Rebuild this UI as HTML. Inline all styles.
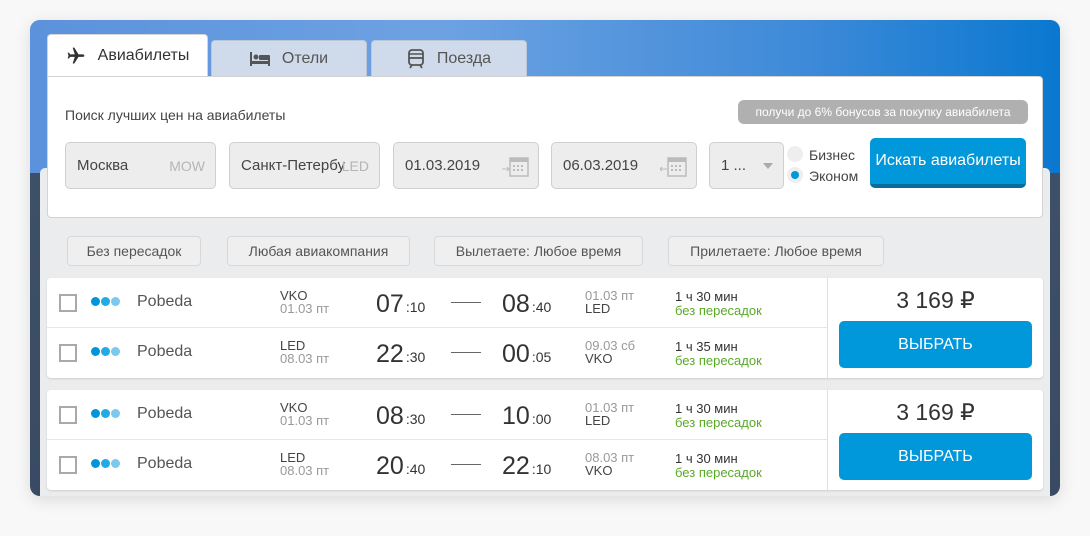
<!DOCTYPE html>
<html><head><meta charset="utf-8"><style>
*{margin:0;padding:0;box-sizing:border-box}
body{width:1090px;height:536px;background:#f8f8f8;font-family:"Liberation Sans",Arial,sans-serif;position:relative;overflow:hidden;color:#333}
.a{position:absolute}
#card{left:30px;top:20px;width:1030px;height:476px;border-radius:10px;overflow:hidden;box-shadow:0 4px 16px rgba(0,0,0,.12);background:linear-gradient(180deg,#5b90da 0,#6a9de0 100px,#4a7fc8 152px,#3e5068 153px,#3a4a63 100%)}
#sky{left:0;top:0;width:1030px;height:153px;background:linear-gradient(90deg,#5c92dc 0%,#6da2e2 40%,#3e8ad8 75%,#0a78d0 100%)}
#panel{left:10px;top:148px;width:1010px;height:340px;background:#ebecee;border-radius:5px}
.tab{height:36px;top:40px;background:#cfdbea;border:1px solid #b9c7d8;border-bottom:none;border-radius:4px 4px 0 0;font-size:16px;color:#555;display:flex;align-items:center;justify-content:center;gap:12px}
#search{left:47px;top:76px;width:996px;height:142px;background:#fff;border:1px solid #d3d3d3;border-radius:0 4px 4px 4px}
.inp{top:142px;height:47px;background:#ededed;border:1px solid #cfcfcf;border-radius:5px;font-size:15px;color:#444;display:flex;align-items:center;padding-left:11px}
.code{position:absolute;right:10px;top:15px;color:#b5b5b5;font-size:14px}
.flt{top:236px;height:30px;border:1px solid #d8d8d8;border-radius:4px;background:#efefef;font-size:14px;color:#555;display:flex;align-items:center;justify-content:center}
.res{left:47px;width:996px;height:100px;background:#fff;border-radius:4px;box-shadow:0 1px 2px rgba(0,0,0,.12)}
.row{position:absolute;left:0;width:780px;height:50px}
.cb{position:absolute;left:12px;top:16px;width:18px;height:18px;border:2px solid #a9a9a9}
.dots{position:absolute;left:44px;top:19px;display:flex;gap:1px}
.dots i{display:block;width:9px;height:9px;border-radius:50%}
.air{position:absolute;left:90px;top:15px;font-size:16px;color:#555}
.ap{position:absolute;font-size:13px;line-height:13px}
.t{position:absolute;top:12px;font-size:25px;color:#333}
.t span{font-size:14px;margin-left:2px}
.ln{position:absolute;left:404px;top:24px;width:30px;height:1px;background:#666}
.dur{position:absolute;left:628px;top:12px;font-size:13px;line-height:14px;color:#333}
.dur b{font-weight:normal;color:#5aaa2a}
.price{position:absolute;left:780px;top:0;width:216px;height:100px;border-left:1px solid #e0e0e0}
.pv{position:absolute;top:9px;width:100%;text-align:center;font-size:23px;color:#333}
.btn{position:absolute;left:11px;top:43px;width:193px;height:47px;background:#0098da;border-radius:5px;color:#fff;font-size:16px;display:flex;align-items:center;justify-content:center}
</style></head><body>
<div id="card" class="a">
<div id="sky" class="a"></div>
<div id="panel" class="a"></div>
</div>
<div class="a tab" style="left:47px;top:34px;width:161px;height:43px;background:#fff;border-color:#d5d5d5;color:#333">
<svg width="20" height="20" viewBox="0 0 24 24"><path fill="#333" d="M21 16v-2l-8-5V3.5C13 2.7 12.3 2 11.5 2h0C10.7 2 10 2.7 10 3.5V9l-8 5v2l8-2.5V19l-2 1.5V22l3.5-1 3.5 1v-1.5L13 19v-5.5z" transform="rotate(90 12 12)"/></svg>Авиабилеты</div>
<div class="a tab" style="left:211px;width:156px"><svg width="20" height="14" viewBox="0 0 20 14"><rect x="0" y="0" width="2" height="14" fill="#555"/><rect x="0" y="9" width="20" height="3" fill="#555"/><rect x="18" y="6" width="2" height="8" fill="#555"/><circle cx="6" cy="5" r="2.5" fill="#555"/><rect x="9" y="3" width="11" height="5" rx="1" fill="#555"/></svg>Отели</div>
<div class="a tab" style="left:371px;width:156px"><svg width="18" height="20" viewBox="0 0 18 20"><rect x="2" y="1" width="14" height="15" rx="3" fill="none" stroke="#555" stroke-width="1.8"/><line x1="2" y1="9" x2="16" y2="9" stroke="#555" stroke-width="1.8"/><line x1="2" y1="5" x2="16" y2="5" stroke="#555" stroke-width="1.5"/><path d="M5 16l-2 3M13 16l2 3" stroke="#555" stroke-width="1.8"/></svg>Поезда</div>
<div id="search" class="a"></div>
<div class="a" style="left:65px;top:107px;font-size:14px;color:#444">Поиск лучших цен на авиабилеты</div>
<div class="a" style="left:738px;top:100px;width:290px;height:24px;background:#b0b0b0;border-radius:6px;color:#fff;font-size:12px;display:flex;align-items:center;justify-content:center">получи до 6% бонусов за покупку авиабилета</div>
<div class="a inp" style="left:65px;width:151px">Москва<span class="code">MOW</span></div>
<div class="a inp" style="left:229px;width:151px;overflow:hidden"><span style="white-space:nowrap">Санкт-Петербу</span><span class="code" style="right:10px">LED</span></div>
<div class="a inp" style="left:393px;width:146px">01.03.2019<svg class="a" style="right:8px;top:12px" width="28" height="22" viewBox="0 0 28 22"><rect x="8" y="3" width="18" height="18" fill="none" stroke="#bbb" stroke-width="1.5"/><rect x="8" y="3" width="18" height="4" fill="#bbb"/><g fill="#bbb"><rect x="11" y="10" width="2" height="2"/><rect x="15" y="10" width="2" height="2"/><rect x="19" y="10" width="2" height="2"/><rect x="11" y="14" width="2" height="2"/><rect x="15" y="14" width="2" height="2"/><rect x="19" y="14" width="2" height="2"/></g><path d="M0 14h7M5 12l2 2-2 2" stroke="#bbb" fill="none"/></svg></div>
<div class="a inp" style="left:551px;width:146px">06.03.2019<svg class="a" style="right:8px;top:12px" width="28" height="22" viewBox="0 0 28 22"><rect x="8" y="3" width="18" height="18" fill="none" stroke="#bbb" stroke-width="1.5"/><rect x="8" y="3" width="18" height="4" fill="#bbb"/><g fill="#bbb"><rect x="11" y="10" width="2" height="2"/><rect x="15" y="10" width="2" height="2"/><rect x="19" y="10" width="2" height="2"/><rect x="11" y="14" width="2" height="2"/><rect x="15" y="14" width="2" height="2"/><rect x="19" y="14" width="2" height="2"/></g><path d="M0 14h7M2 12l-2 2 2 2" stroke="#bbb" fill="none"/></svg></div>
<div class="a inp" style="left:709px;width:75px">1 ...<span class="a" style="right:10px;top:20px;border:5px solid transparent;border-top:6px solid #aaa"></span></div>
<div class="a" style="left:787px;top:146px;width:16px;height:16px;border-radius:50%;background:#eee"></div>
<div class="a" style="left:787px;top:167px;width:16px;height:16px;border-radius:50%;background:#eee"><div style="margin:4px;width:8px;height:8px;border-radius:50%;background:#0098da"></div></div>
<div class="a" style="left:809px;top:147px;font-size:14px;color:#444">Бизнес</div>
<div class="a" style="left:809px;top:168px;font-size:14px;color:#444">Эконом</div>
<div class="a" style="left:870px;top:138px;width:156px;height:50px;background:#0098da;border-bottom:4px solid #0a6c9a;border-radius:5px;color:#fff;font-size:16px;display:flex;align-items:center;justify-content:center">Искать авиабилеты</div>
<div class="a flt" style="left:67px;width:134px">Без пересадок</div>
<div class="a flt" style="left:227px;width:183px">Любая авиакомпания</div>
<div class="a flt" style="left:434px;width:209px">Вылетаете: Любое время</div>
<div class="a flt" style="left:668px;width:216px">Прилетаете: Любое время</div>

<div class="a res" style="top:278px">
 <div class="row" style="top:0;border-bottom:1px solid #e6e6e6"><div class="cb"></div><div class="dots"><i style="background:#0094d9"></i><i style="background:#22aae3"></i><i style="background:#7cc8ee"></i></div><div class="air">Pobeda</div>
 <div class="ap" style="left:233px;top:11px;color:#444">VKO<br><span style="color:#999">01.03 пт</span></div>
 <div class="t" style="left:329px">07<span>:10</span></div><div class="ln"></div><div class="t" style="left:455px">08<span>:40</span></div>
 <div class="ap" style="left:538px;top:11px;color:#999">01.03 пт<br><span style="color:#444">LED</span></div>
 <div class="dur">1 ч 30 мин<br><b>без пересадок</b></div></div>
 <div class="row" style="top:50px"><div class="cb"></div><div class="dots"><i style="background:#0094d9"></i><i style="background:#22aae3"></i><i style="background:#7cc8ee"></i></div><div class="air">Pobeda</div>
 <div class="ap" style="left:233px;top:11px;color:#444">LED<br><span style="color:#999">08.03 пт</span></div>
 <div class="t" style="left:329px">22<span>:30</span></div><div class="ln"></div><div class="t" style="left:455px">00<span>:05</span></div>
 <div class="ap" style="left:538px;top:11px;color:#999">09.03 сб<br><span style="color:#444">VKO</span></div>
 <div class="dur">1 ч 35 мин<br><b>без пересадок</b></div></div>
 <div class="price"><div class="pv">3 169 ₽</div><div class="btn">ВЫБРАТЬ</div></div>
</div>

<div class="a res" style="top:390px">
 <div class="row" style="top:0;border-bottom:1px solid #e6e6e6"><div class="cb"></div><div class="dots"><i style="background:#0094d9"></i><i style="background:#22aae3"></i><i style="background:#7cc8ee"></i></div><div class="air">Pobeda</div>
 <div class="ap" style="left:233px;top:11px;color:#444">VKO<br><span style="color:#999">01.03 пт</span></div>
 <div class="t" style="left:329px">08<span>:30</span></div><div class="ln"></div><div class="t" style="left:455px">10<span>:00</span></div>
 <div class="ap" style="left:538px;top:11px;color:#999">01.03 пт<br><span style="color:#444">LED</span></div>
 <div class="dur">1 ч 30 мин<br><b>без пересадок</b></div></div>
 <div class="row" style="top:50px"><div class="cb"></div><div class="dots"><i style="background:#0094d9"></i><i style="background:#22aae3"></i><i style="background:#7cc8ee"></i></div><div class="air">Pobeda</div>
 <div class="ap" style="left:233px;top:11px;color:#444">LED<br><span style="color:#999">08.03 пт</span></div>
 <div class="t" style="left:329px">20<span>:40</span></div><div class="ln"></div><div class="t" style="left:455px">22<span>:10</span></div>
 <div class="ap" style="left:538px;top:11px;color:#999">08.03 пт<br><span style="color:#444">VKO</span></div>
 <div class="dur">1 ч 30 мин<br><b>без пересадок</b></div></div>
 <div class="price"><div class="pv">3 169 ₽</div><div class="btn">ВЫБРАТЬ</div></div>
</div>
</body></html>
